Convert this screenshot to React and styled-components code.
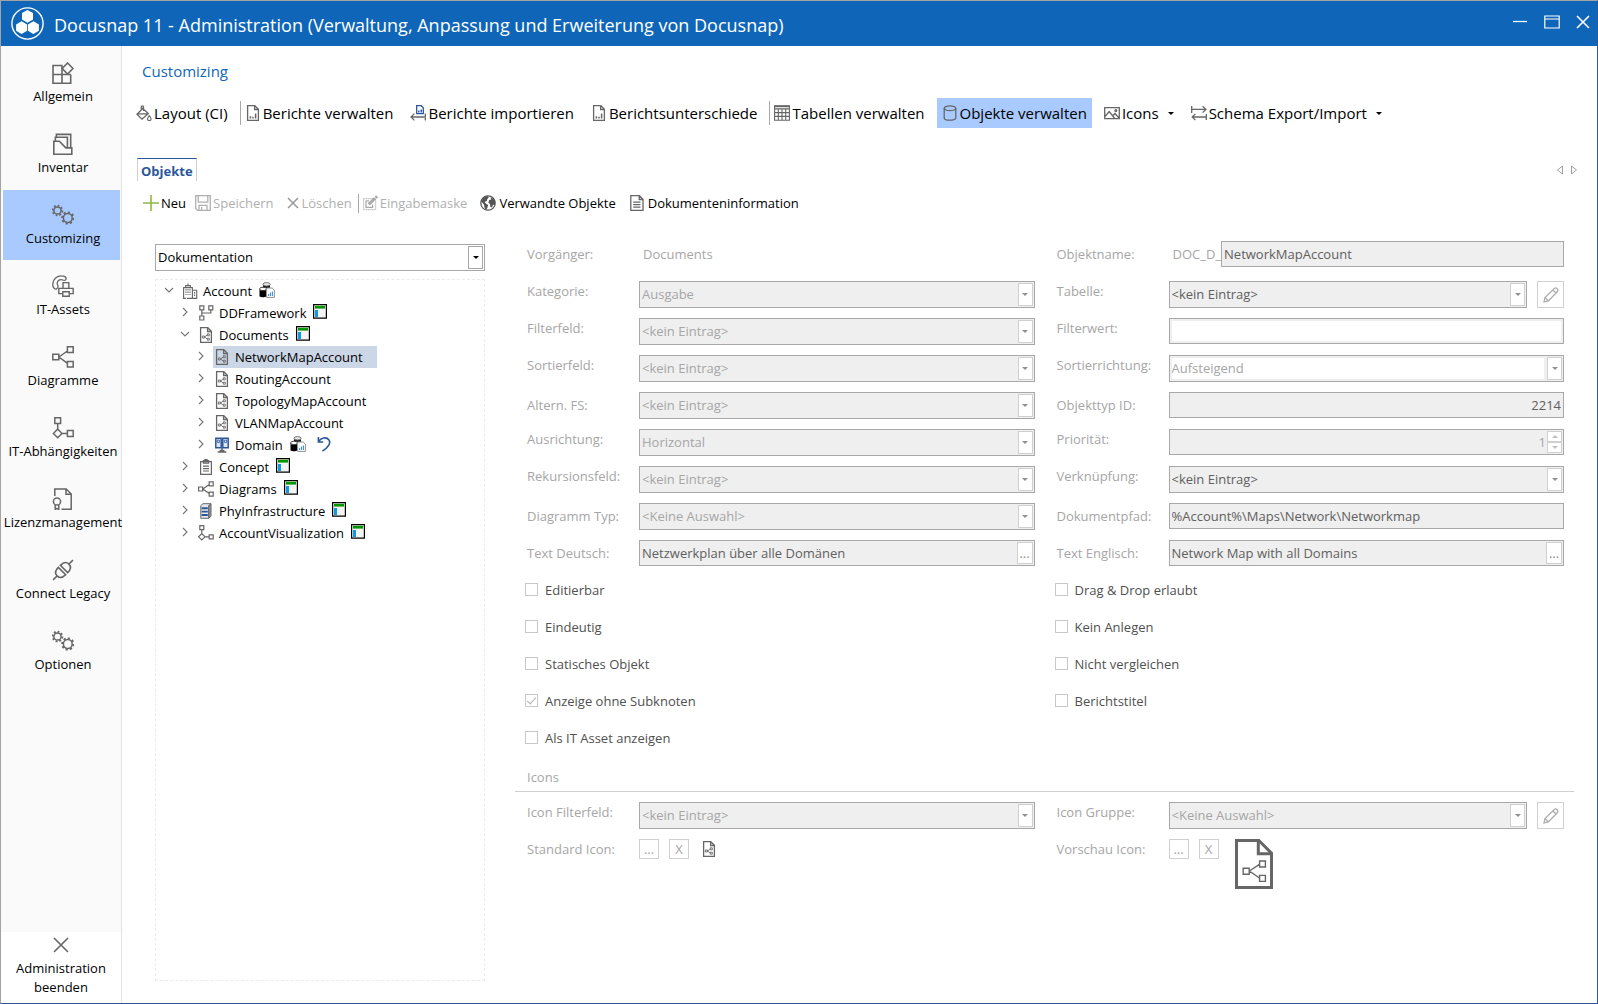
import React from "react";
import styled, { createGlobalStyle, css } from "styled-components";

const c = {
  blue: "#0f66b9",
  navy: "#2b579a",
  select: "#a9caff",
  grey: "#666666",
  label: "#a6a6a6",
  value: "#606060",
  edge: "#a8a8a8",
  soft: "#d0d0d0",
  field: "#efefef",
};

const Global = createGlobalStyle`
  *, *::before, *::after { box-sizing: border-box; }
  body { margin: 0; background: #fff; }
  body, button, input, select {
    font-family: "Open Sans", "Noto Sans", sans-serif;
    font-size: 13px;
    line-height: 18px;
    color: #000;
  }
  button {
    border: 0; padding: 0; background: none;
    display: inline-flex; align-items: center; justify-content: center;
    white-space: nowrap;
  }
  svg { display: block; flex: none; }
`;

/* ---------- window frame ---------- */

const Window = styled.div`
  min-height: 100vh;
  display: flex;
  flex-direction: column;
  border: 1px solid ${c.navy};
  border-top-color: #a3a3a3;
  border-left-color: #a3a3a3;
`;

const TitleBar = styled.header`
  flex: none;
  height: 45px;
  display: flex;
  align-items: center;
  padding: 0 7px 0 10px;
  gap: 10px;
  background: ${c.blue};
  color: #fff;
`;

const Title = styled.h1`
  flex: 1;
  margin: 0;
  padding-top: 2px;
  font-size: 18px;
  line-height: 24px;
  font-weight: 400;
`;

const WindowButtons = styled.div`
  display: flex;
  gap: 16px;
  padding-bottom: 3px;
`;

const Body = styled.div`
  flex: 1;
  display: flex;
`;

/* ---------- sidebar ---------- */

const Sidebar = styled.nav`
  flex: none;
  width: 121px;
  display: flex;
  flex-direction: column;
  background: #fafafa;
  border-right: 1px solid #e2e2e2;
`;

const NavList = styled.div`
  flex: 1;
  display: flex;
  flex-direction: column;
  gap: 1px;
  padding: 2px 1px 0 2px;
`;

const NavItem = styled.button`
  height: 70px;
  flex-direction: column;
  gap: 3px;
  padding-left: 3px;
  background: ${(p) => (p.$active ? c.select : "transparent")};
`;

const ExitItem = styled.button`
  height: 71px;
  flex-direction: column;
  background: #fff;
  gap: 6px;
  line-height: 19px;
  white-space: normal;
  padding: 0 12px 2px;
`;

/* ---------- main area ---------- */

const Main = styled.main`
  flex: 1;
  min-width: 0;
  display: flex;
  flex-direction: column;
  padding-bottom: 22px;
`;

const Heading = styled.h2`
  margin: 13px 0 0 20px;
  font-size: 15px;
  line-height: 24px;
  font-weight: 400;
  color: ${c.blue};
`;

const MainToolbar = styled.div`
  display: flex;
  align-items: center;
  gap: 7px;
  margin: 15px 0 0 9px;
`;

const ToolButton = styled.button`
  height: 30px;
  padding: 0 5px;
  gap: 2px;
  font-size: 15px;
  line-height: 20px;
  background: ${(p) => (p.$active ? c.select : "transparent")};
`;

const Separator = styled.span`
  width: 1px;
  height: ${(p) => p.$height}px;
  margin-left: -${(p) => p.$before || 0}px;
  margin-right: -${(p) => p.$pull}px;
  background: ${c.edge};
`;

const Caret = styled.span`
  margin-left: ${(p) => p.$space || 0}px;
  border: 3px solid transparent;
  border-top-color: ${(p) => p.$tone || "#000"};
  border-bottom-width: 0;
`;

const TabRow = styled.div`
  display: flex;
  align-items: center;
  justify-content: space-between;
  margin: 30px 19px 0 15px;
`;

const Tab = styled.button`
  height: 23px;
  padding: 2px 3px 0;
  border: 1px solid ${c.soft};
  border-top-color: ${c.navy};
  border-bottom: 0;
  font-weight: 700;
  color: ${c.navy};
`;

const TabArrows = styled.div`
  display: flex;
  gap: 6px;
`;

const SubToolbar = styled.div`
  display: flex;
  align-items: center;
  gap: 9px;
  height: 20px;
  margin: 12px 0 0 21px;
`;

const SubButton = styled.button`
  gap: ${(p) => (p.$loose ? 3 : 2)}px;
  padding-left: ${(p) => (p.$loose ? 4 : 0)}px;
  color: ${(p) => (p.disabled ? "#b0b0b0" : "#000")};
`;

const Workspace = styled.div`
  flex: 1;
  display: flex;
  margin: 28px 33px 0 33px;
`;

/* ---------- tree ---------- */

const TreePane = styled.section`
  flex: none;
  width: 330px;
  display: flex;
  flex-direction: column;
  gap: 8px;
  padding-top: 3px;
`;

const Tree = styled.div`
  flex: 1;
  border: 1px dashed #ebebeb;
`;

const TreeRow = styled.div`
  display: flex;
  align-items: center;
  height: 22px;
  padding-left: ${(p) => 5 + 16 * p.$level}px;
`;

const Toggle = styled.button`
  width: 16px;
  height: 22px;
  margin-right: 4px;
  padding-bottom: 2px;
`;

const TreeLabel = styled.button`
  height: 22px;
  gap: 5px;
  padding: 0 ${(p) => (p.$active ? 14 : 7)}px 0 1px;
  background: ${(p) => (p.$active ? "#cbd6e6" : "transparent")};
`;

const Marks = styled.span`
  display: flex;
  gap: 11px;
  padding-bottom: 3px;
`;

/* ---------- form ---------- */

const Form = styled.form`
  flex: 1;
  min-width: 0;
  padding-left: 42px;
  color: ${c.label};
`;

const Columns = styled.div`
  display: grid;
  grid-template-columns: 1fr 1fr;
  column-gap: 22px;
`;

const Column = styled.div`
  display: grid;
  grid-auto-rows: ${(p) => p.$row || 27}px;
  row-gap: ${(p) => (p.$row ? 0 : 10)}px;
  align-content: start;
`;

const Row = styled.div`
  display: grid;
  grid-template-columns: 112px minmax(0, 1fr);
  align-items: start;
`;

const Label = styled.label`
  line-height: ${(p) => (p.$raised ? 20 : 26)}px;
`;

const Plain = styled.output`
  line-height: 26px;
  padding-left: 4px;
`;

const Inline = styled.div`
  display: flex;
  align-items: flex-start;
  gap: ${(p) => p.$gap || 0}px;
`;

const FieldBox = styled.div`
  flex: 1;
  min-width: 0;
  display: flex;
  height: ${(p) => p.$height || 26}px;
  padding: 1px;
  border: 1px solid ${c.edge};
  background: ${(p) => (p.$white ? "#fff" : c.field)};
`;

const control = css`
  flex: 1;
  min-width: 0;
  margin: 0;
  padding: 0 0 0 1px;
  border: 0;
  border-radius: 0;
  outline: 0;
  opacity: 1;
  appearance: none;
  color: ${(p) => p.$tone || c.label};
`;

const Select = styled.select`
  ${control}
  background: ${(p) => (p.$fill ? "#fff" : "transparent")};
  margin: ${(p) => (p.$fill ? "1px 3px 1px 1px" : 0)};
  padding-left: ${(p) => (p.$fill ? 0 : 1)}px;
  padding-bottom: 2px;
`;

const TextInput = styled.input`
  ${control}
  padding-right: 1px;
  text-align: ${(p) => p.$align || "left"};
  background: ${(p) => (p.$fill ? "#fff" : "transparent")};
  margin: ${(p) => (p.$fill ? "1px" : 0)};
`;

const ArrowBox = styled.span`
  flex: none;
  width: 15px;
  display: flex;
  align-items: center;
  justify-content: center;
  border: 1px solid ${(p) => p.$edge || c.soft};
  background: #fff;
`;

const MoreButton = styled.button`
  flex: none;
  width: 16px;
  border: 1px solid ${c.soft};
  background: #fff;
  color: #909090;
`;

const Spinner = styled.div`
  flex: none;
  width: 15px;
  display: grid;
  grid-template-rows: 1fr 1fr;
`;

const SpinButton = styled.button`
  border: 1px solid ${c.soft};
  background: #fff;
`;

const CaretUp = styled.span`
  border: 3px solid transparent;
  border-bottom-color: #c0c0c0;
  border-top-width: 0;
`;

const EditButton = styled.button`
  width: 27px;
  height: 27px;
  border: 1px solid ${c.soft};
`;

const SmallButton = styled.button`
  width: 20px;
  height: 20px;
  border: 1px solid ${c.soft};
  color: ${c.label};
`;

const CheckLabel = styled.label`
  display: flex;
  align-items: flex-start;
  gap: 7px;
  margin-left: -2px;
  color: #505050;
`;

const CheckBox = styled.input`
  appearance: none;
  width: 13px;
  height: 13px;
  margin: 2px 0 0;
  display: grid;
  place-content: center;
  border: 1px solid #c8c8c8;
  background: #fff;

  &:checked::before {
    content: "";
    width: 9px;
    height: 5px;
    margin-bottom: 3px;
    border: solid #b0b0b0;
    border-width: 0 0 1px 1px;
    transform: rotate(-48deg);
  }
`;

const GroupTitle = styled.h3`
  margin: 2px -10px 0 -12px;
  padding: 0 0 5px 12px;
  border-bottom: 1px solid ${c.soft};
  font-size: 13px;
  line-height: 18px;
  font-weight: 400;
`;

const Spacer = styled.div`
  height: ${(p) => p.$height}px;
`;

const Preview = styled.span`
  padding: ${(p) => (p.$large ? "0 0 0 6px" : "2px 0 0 2px")};
`;

/* ---------- icons ---------- */

const Svg = ({ w = 16, h = 16, color = c.grey, sw = 1.3, children }) => (
  <svg width={w} height={h} viewBox={`0 0 ${w} ${h}`} fill="none" stroke={color} strokeWidth={sw} aria-hidden="true">
    {children}
  </svg>
);

const hex = (x, y, r) =>
  [0, 1, 2, 3, 4, 5]
    .map((i) => {
      const a = (Math.PI / 3) * i + Math.PI / 6;
      return `${(x + r * Math.cos(a)).toFixed(1)},${(y + r * Math.sin(a)).toFixed(1)}`;
    })
    .join(" ");

const Logo = () => (
  <Svg w={33} h={33} color="#fff" sw={1.4}>
    <circle cx="16.5" cy="16.5" r="15.6" />
    <g fill="#fff" stroke="none">
      <polygon points={hex(16.5, 9.3, 6.4)} />
      <polygon points={hex(10.6, 20.6, 6.4)} />
      <polygon points={hex(22.4, 20.6, 6.4)} />
    </g>
  </Svg>
);

const Gear = ({ x, y, r }) => (
  <>
    <circle cx={x} cy={y} r={r} />
    <circle cx={x} cy={y} r={r + 1.3} pathLength="16" strokeDasharray="1 1" strokeWidth="1.8" />
  </>
);

const nav = {
  general: (
    <Svg w={22} h={22} sw={1.6}>
      <path d="M10.5 3.5H1v17.7h17.7v-8.7M1 12.5h17.7M10 3.5v17.7" />
      <path d="M15.6 1l5.4 5.5-5.4 5.5-5.4-5.5z" fill="#fafafa" />
    </Svg>
  ),
  inventory: (
    <Svg w={22} h={22} sw={1.6}>
      <path d="M1.8 8.3h5.6l6.4 6.6h6v6.3h-18z" />
      <path d="M3.4 8V4.3h12v10.3M4.4 4V1.4h14.3v13.2" />
    </Svg>
  ),
  gears: (
    <Svg w={22} h={22} sw={1.5}>
      <Gear x={5.5} y={6.5} r={3.6} />
      <Gear x={15.8} y={14} r={4.4} />
    </Svg>
  ),
  assets: (
    <Svg w={22} h={22} sw={1.4}>
      <path
        d="M4.2 14.2C1.6 13.6.6 11.2.8 8.6 1.2 4 5 .7 9.4.8c2 0 4 .6 4.6 2 .5 1.4-.4 2.6-1.8 2.6-1.2 0-1.8-.8-2.8-.8-2.2 0-4 1.6-4.2 3.8 0 1.2.8 1.6.8 2.8 0 1.4-.6 2.4-1.8 3z"
        strokeWidth="1.3"
      />
      <path d="M11 13.4V7.6h5.8v5.8" />
      <path d="M10.6 18.6H6.8v-5.2h14.4v5.2h-3.6" />
      <path d="M10.8 16.8h6.4v4.5h-6.4z" />
    </Svg>
  ),
  diagrams: (
    <Svg w={22} h={22} sw={1.5}>
      <path d="M.8 8.2h6v5.6h-6zM15.4.8h5.8v5.6h-5.8zM15.4 15.4h5.8V21h-5.8zM7 11l8.4-6M7 11l8.4 6.4" />
    </Svg>
  ),
  deps: (
    <Svg w={22} h={22} sw={1.5}>
      <path d="M2.8.8h5.8v5.8H2.8zM15.4 13.6h5.8v5.8h-5.8zM5.7 6.6v5.2M10 16.4h5.4M5.7 12l4.3 4.4-4.3 4.4-4.3-4.4z" />
    </Svg>
  ),
  license: (
    <Svg w={22} h={22} sw={1.5}>
      <path d="M2.8 8V1h11.4l5 5v15.2H9.5M14 1v5.2h5.2" />
      <circle cx="5" cy="13.5" r="3.6" />
      <path d="M3.2 17v4.5l1.8-1.2 1.8 1.2V17" />
    </Svg>
  ),
  plug: (
    <Svg w={22} h={22} sw={1.6}>
      <g transform="rotate(-45 11 11)">
        <path d="M-3 11h5.5M19.5 11H25M9.6 5.8C5 5.8 2.6 8 2.6 11s2.4 5.2 7 5.2zM12.4 5.8c4.6 0 7 2.2 7 5.2s-2.4 5.2-7 5.2z" />
      </g>
    </Svg>
  ),
};

const Cross = ({ size = 16, color = c.grey, sw = 1.6 }) => (
  <Svg w={size} h={size} color={color} sw={sw}>
    <path d={`M1 1L${size - 1} ${size - 1}M${size - 1} 1L1 ${size - 1}`} />
  </Svg>
);

const BucketIcon = () => (
  <Svg w={16} h={16}>
    <path d="M6.6 3.5L1 9.2l5 5 6.3-5.8zM1.5 8.8h10.3M5.3 6V1.8c0-1.2 2.2-1.2 2.2 0V6" />
    <path d="M13.3 10.6c1.2 1.6 1.8 2.4 1.8 3.2a1.8 1.8 0 01-3.6 0c0-.8.6-1.6 1.8-3.2z" strokeWidth="1.1" fill="#fff" />
  </Svg>
);

const ReportIcon = () => (
  <Svg>
    <path d="M2.6.7h7.2l3.6 3.6v11H2.6zM9.6.7v3.8h3.8" />
    <path d="M5.4 13.6v-2.4M8 13.6v-1.8M10.6 13.6V8.4" strokeWidth="1.5" />
  </Svg>
);

const ImportIcon = () => (
  <Svg>
    <path d="M6.7.7h4.6l2 2v6H6.7z" stroke={c.navy} />
    <path d="M8.8 7.5V5.6M11.2 7.5V4.6" stroke={c.navy} strokeWidth="1.4" />
    <path d="M15.3 8.5v7M14.5 12H1M4.4 8.6L1 12l3.4 3.4" />
  </Svg>
);

const TableIcon = () => (
  <Svg sw={1.1}>
    <path d="M.6.8h14.8v14.4H.6zM.6 3.9h14.8M.6 7.6h14.8M.6 11.4h14.8M4.3 3.9v11.3M8 3.9v11.3M11.7 3.9v11.3" />
    <path d="M.6 1.4h14.8" strokeWidth="1.6" />
  </Svg>
);

const CylinderIcon = () => (
  <Svg>
    <ellipse cx="8" cy="3.3" rx="5.8" ry="2.4" />
    <path d="M2.2 3.3v9.6c0 3 11.6 3 11.6 0V3.3" />
  </Svg>
);

const PictureIcon = () => (
  <Svg>
    <path d="M.7 2.7h14.6v11H.7zM1 11.5l4.2-5 5.6 7M9 10.5l2-2 4 4.5" />
    <circle cx="11.8" cy="5.6" r=".9" />
  </Svg>
);

const ExchangeIcon = () => (
  <Svg>
    <path d="M.7 1v7M.7 4.4h14M11.6 1.2l3.3 3.2-3.3 3.2M15.3 9v6M15 12H1.2M4.4 8.9L1.2 12l3.2 3.1" />
  </Svg>
);

const PlusIcon = () => (
  <Svg color="#8cbb3f" sw={1.6}>
    <path d="M8 0v16M0 8h16" />
  </Svg>
);

const SaveIcon = () => (
  <Svg color="#b0b0b0">
    <path d="M.7.7h14.6v14.6H2.6L.7 13.4zM3.2 1v6.2h9.6V1M4 15v-4.6h8V15M6.6 12v3" />
  </Svg>
);

const MaskIcon = () => (
  <Svg color="#a8a8a8" sw={1.2}>
    <path d="M1.6 3.6h12v11h-12z" strokeDasharray="1 1" />
    <path d="M4 5.8v6.6h6.6V9.5M4 5.8h3" />
    <path d="M6.8 9.4L13 3.2" strokeWidth="3" />
    <path d="M13.4 1l2 2" strokeWidth="2" />
  </Svg>
);

const GlobeIcon = () => (
  <Svg color="#555">
    <circle cx="8" cy="8" r="7.2" />
    <path
      d="M1.2 6.2L3.5 2.4 7.6 1l1.2 1.6-1.6 1.6-.4 1.8-2.2 1L6.4 9l1.8 1-1 3.2-1.2 2-1.6-3-.4-2.4zM10.5 2.2l3 1.6 1.6 3.4-.4 3-1.8-.4-.9 2.8-1.6-.6-.4-3-1.6-1.6.8-2.4 2-.6z"
      fill="#555"
      stroke="none"
    />
  </Svg>
);

const DocIcon = () => (
  <Svg>
    <path d="M1.8.7h8.6l3.6 3.6v11H1.8zM10.2.7v3.8H14M4.2 7.2h7.2M4.2 9.7h7.2M4.2 12.2h7.2" />
  </Svg>
);

const MapDoc = () => (
  <Svg>
    <path d="M2.6.7h7.2l3.6 3.6v11H2.6zM9.6.7v3.8h3.8" />
    <path d="M4.4 9h2v2h-2zM9.3 6.8h2v2h-2zM9.3 11.2h2v2h-2zM6.5 10l2.8-2M6.5 10l2.8 2" strokeWidth=".9" />
  </Svg>
);

const BigMapDoc = () => (
  <Svg w={38} h={50} sw={3}>
    <path d="M1.5 1.5h22.3L36.5 14.2v34.3h-35z" />
    <path d="M23.3 1.5v13.2h13.2" />
    <path d="M8.2 29.2h6v6h-6zM24.6 22h5.8v6h-5.8zM24.6 36.4h5.8v6h-5.8zM14.4 32l10-6.6M14.4 32l10 7" strokeWidth="1.4" />
  </Svg>
);

const BuildingIcon = () => (
  <Svg sw={1.1}>
    <path d="M1.6 15.4V4.6h8.8v10.8M3.6 4.4V2.6h4.8v1.8M6 2.5V.4M10.5 7.2h4.2v8.2H5M1 15.4h3" />
    <path d="M4 6v6M6 6v6M8 6v6M12.6 9v5" strokeDasharray="1.4 1.1" />
  </Svg>
);

const FrameIcon = () => (
  <Svg sw={1.2}>
    <path d="M1.8.8h4v4h-4zM10.8.8h4v4h-4zM1.8 11h4v4h-4zM3.8 5v6M3.8 8h9V5" />
  </Svg>
);

const ConceptIcon = () => (
  <Svg sw={1.2}>
    <path d="M2.6 2.6h10.8v12.8H2.6zM5.4 1.6h5.2v2.6H5.4zM7 1.4V.5h2v.9M5 7.2h6M5 9.6h6M5 12h6" />
  </Svg>
);

const ShareIcon = () => (
  <Svg sw={1.2}>
    <path d="M.6 6h4v4h-4zM11.2.8h4v4h-4zM11.2 11.2h4v4h-4zM4.8 8l6.4-4.6M4.8 8l6.4 4.6" />
  </Svg>
);

const VisualIcon = () => (
  <Svg sw={1.2}>
    <path d="M1.8.6h4v4h-4zM11.2 9.8h4v4h-4zM3.8 4.8v3.8M7 11.8h4.2M3.8 8.6L7 11.8 3.8 15 .6 11.8z" />
  </Svg>
);

const RackIcon = () => (
  <Svg sw={1}>
    <path d="M10.6 2.6L13 .7v12.6l-2.4 2z" fill="#8f959e" />
    <path d="M2.8 2.6L5 .7h8l-2.4 1.9v12.7H2.8z" fill="#e4e7eb" />
    <path d="M3.6 5.2h6.2M3.6 8.6h6.2M3.6 12h6.2" stroke={c.navy} strokeWidth="1.9" />
  </Svg>
);

const DomainIcon = () => (
  <Svg sw={1.5} color={c.navy}>
    <path d="M1.8 1.2h5.4v9.6H1.8zM8.8 1.2h5.4v9.6H8.8z" fill="#dfe9f6" />
    <path d="M3.4 3h2v2.6h-2zM10.6 3h2v2.6h-2z" strokeWidth=".8" />
    <path d="M8 11v2.4M3.6 15h8.8M5.6 13.6h4.8" stroke={c.grey} />
  </Svg>
);

const DataMark = () => (
  <Svg>
    <path d="M4 2.4h7v4H4z" fill="#111" stroke="none" />
    <ellipse cx="7.6" cy="2.3" rx="3.6" ry="1.7" fill="#e8e8e8" stroke="#777" strokeWidth="1" />
    <path d="M.5 7h6.8v7.4C5.8 15.4 2 15.4.5 14.4z" fill="#000" stroke="none" />
    <ellipse cx="4" cy="6.9" rx="3.4" ry="1.7" fill="#fff" stroke="#444" strokeWidth="1" />
    <path d="M7.6 6h5.6l2.2 2.2v7.2H7.6z" fill="#fff" stroke="#8a9098" strokeWidth="1" />
    <path d="M9.6 14v-2M11.5 14v-3.4M13.4 14V9.4" stroke="#3f8fd0" strokeWidth="1.1" />
  </Svg>
);

const WindowMark = () => (
  <Svg w={14} h={15} color="#000" sw={1.2}>
    <path d="M.6.6h12.8v13.6H.6z" fill="#f4f4f4" />
    <path d="M2 3.2h10" stroke="#009600" strokeWidth="2.8" />
    <path d="M3.5 6v7" stroke="#109be0" strokeWidth="3" />
  </Svg>
);

const UndoMark = () => (
  <Svg w={14} h={16} color={c.navy} sw={1.6}>
    <path d="M1.4 1v5h4.8M1.6 5.6C4 1.6 9.4.6 11.8 3.8c2.4 3.2-.2 7.4-6.4 11.4" />
  </Svg>
);

const PencilIcon = () => (
  <Svg color="#adadad" sw={1.3}>
    <path d="M1 15l1-4.4L11.6 1.2c1.6-1 4 1.2 3.1 3.1L5.4 14zM10 3l3 3M2.2 10.6l3.2 3.2" />
  </Svg>
);

const Chevron = ({ open }) => (
  <Svg w={10} h={10} color="#777" sw={1.1}>
    <path d={open ? "M1 3l4 4 4-4" : "M3 1l4 4-4 4"} />
  </Svg>
);

/* ---------- data ---------- */

const navItems = [
  ["Allgemein", nav.general],
  ["Inventar", nav.inventory],
  ["Customizing", nav.gears],
  ["IT-Assets", nav.assets],
  ["Diagramme", nav.diagrams],
  ["IT-Abhängigkeiten", nav.deps],
  ["Lizenzmanagement", nav.license],
  ["Connect Legacy", nav.plug],
  ["Optionen", nav.gears],
];

const treeItems = [
  { text: "Account", level: 0, open: true, Icon: BuildingIcon, marks: [DataMark] },
  { text: "DDFramework", level: 1, Icon: FrameIcon, marks: [WindowMark] },
  { text: "Documents", level: 1, open: true, Icon: MapDoc, marks: [WindowMark] },
  { text: "NetworkMapAccount", level: 2, Icon: MapDoc, active: true },
  { text: "RoutingAccount", level: 2, Icon: MapDoc },
  { text: "TopologyMapAccount", level: 2, Icon: MapDoc },
  { text: "VLANMapAccount", level: 2, Icon: MapDoc },
  { text: "Domain", level: 2, Icon: DomainIcon, marks: [DataMark, UndoMark] },
  { text: "Concept", level: 1, Icon: ConceptIcon, marks: [WindowMark] },
  { text: "Diagrams", level: 1, Icon: ShareIcon, marks: [WindowMark] },
  { text: "PhyInfrastructure", level: 1, Icon: RackIcon, marks: [WindowMark] },
  { text: "AccountVisualization", level: 1, Icon: VisualIcon, marks: [WindowMark] },
];

/* ---------- form parts ---------- */

const Choice = ({ id, value, tone, fill }) => (
  <FieldBox $height={27}>
    <Select id={id} disabled $tone={tone} $fill={fill}>
      <option>{value}</option>
    </Select>
    <ArrowBox>
      <Caret $tone="#909090" />
    </ArrowBox>
  </FieldBox>
);

const Field = ({ label, id, raised, children }) => (
  <Row>
    <Label htmlFor={id} $raised={raised}>
      {label}
    </Label>
    {children}
  </Row>
);

const Check = ({ label, checked }) => (
  <CheckLabel>
    <CheckBox type="checkbox" defaultChecked={checked} disabled />
    {label}
  </CheckLabel>
);

const Edit = ({ label }) => (
  <EditButton type="button" aria-label={label}>
    <PencilIcon />
  </EditButton>
);

const More = ({ label }) => (
  <MoreButton type="button" aria-label={label}>
    ...
  </MoreButton>
);

const ObjectForm = () => (
  <Form>
    <Columns>
      <Column>
        <Field label="Vorgänger:" id="parent">
          <Plain id="parent">Documents</Plain>
        </Field>
      </Column>
      <Column>
        <Field label="Objektname:" id="name">
          <Inline>
            <Plain as="span">DOC_D_</Plain>
            <FieldBox>
              <TextInput id="name" defaultValue="NetworkMapAccount" $tone={c.value} readOnly />
            </FieldBox>
          </Inline>
        </Field>
      </Column>
    </Columns>
    <Spacer $height={13} />
    <Columns>
      <Column>
        <Field label="Kategorie:" id="category" raised>
          <Choice id="category" value="Ausgabe" />
        </Field>
        <Field label="Filterfeld:" id="filterfield" raised>
          <Choice id="filterfield" value="<kein Eintrag>" />
        </Field>
        <Field label="Sortierfeld:" id="sortfield" raised>
          <Choice id="sortfield" value="<kein Eintrag>" />
        </Field>
        <Field label="Altern. FS:" id="altfs">
          <Choice id="altfs" value="<kein Eintrag>" />
        </Field>
        <Field label="Ausrichtung:" id="orient" raised>
          <Choice id="orient" value="Horizontal" />
        </Field>
        <Field label="Rekursionsfeld:" id="recursion" raised>
          <Choice id="recursion" value="<kein Eintrag>" />
        </Field>
        <Field label="Diagramm Typ:" id="diagram">
          <Choice id="diagram" value="<Keine Auswahl>" />
        </Field>
        <Field label="Text Deutsch:" id="textde">
          <FieldBox>
            <TextInput id="textde" defaultValue="Netzwerkplan über alle Domänen" $tone={c.value} readOnly />
            <More label="Text Deutsch bearbeiten" />
          </FieldBox>
        </Field>
      </Column>
      <Column>
        <Field label="Tabelle:" id="table" raised>
          <Inline $gap={10}>
            <Choice id="table" value="<kein Eintrag>" tone={c.value} />
            <Edit label="Tabelle bearbeiten" />
          </Inline>
        </Field>
        <Field label="Filterwert:" id="filtervalue" raised>
          <FieldBox>
            <TextInput id="filtervalue" $fill readOnly />
          </FieldBox>
        </Field>
        <Field label="Sortierrichtung:" id="sortdir" raised>
          <Choice id="sortdir" value="Aufsteigend" fill />
        </Field>
        <Field label="Objekttyp ID:" id="typeid">
          <FieldBox>
            <TextInput id="typeid" defaultValue="2214" $tone={c.value} $align="right" readOnly />
          </FieldBox>
        </Field>
        <Field label="Priorität:" id="priority" raised>
          <FieldBox>
            <TextInput id="priority" defaultValue="1" $align="right" readOnly />
            <Spinner>
              <SpinButton type="button" aria-label="Erhöhen">
                <CaretUp />
              </SpinButton>
              <SpinButton type="button" aria-label="Verringern">
                <Caret $tone="#c0c0c0" />
              </SpinButton>
            </Spinner>
          </FieldBox>
        </Field>
        <Field label="Verknüpfung:" id="link" raised>
          <Choice id="link" value="<kein Eintrag>" tone={c.value} />
        </Field>
        <Field label="Dokumentpfad:" id="path">
          <FieldBox>
            <TextInput id="path" defaultValue="%Account%\Maps\Network\Networkmap" $tone={c.value} readOnly />
          </FieldBox>
        </Field>
        <Field label="Text Englisch:" id="texten">
          <FieldBox>
            <TextInput id="texten" defaultValue="Network Map with all Domains" $tone={c.value} readOnly />
            <More label="Text Englisch bearbeiten" />
          </FieldBox>
        </Field>
      </Column>
    </Columns>
    <Spacer $height={14} />
    <Columns>
      <Column $row={37}>
        <Check label="Editierbar" />
        <Check label="Eindeutig" />
        <Check label="Statisches Objekt" />
        <Check label="Anzeige ohne Subknoten" checked />
        <Check label="Als IT Asset anzeigen" />
      </Column>
      <Column $row={37}>
        <Check label="Drag & Drop erlaubt" />
        <Check label="Kein Anlegen" />
        <Check label="Nicht vergleichen" />
        <Check label="Berichtstitel" />
      </Column>
    </Columns>
    <GroupTitle>Icons</GroupTitle>
    <Spacer $height={10} />
    <Columns>
      <Column>
        <Field label="Icon Filterfeld:" id="iconfilter" raised>
          <Choice id="iconfilter" value="<kein Eintrag>" />
        </Field>
        <Field label="Standard Icon:" id="stdicon" raised>
          <Inline $gap={10}>
            <SmallButton type="button" id="stdicon">...</SmallButton>
            <SmallButton type="button">X</SmallButton>
            <Preview>
              <MapDoc />
            </Preview>
          </Inline>
        </Field>
      </Column>
      <Column>
        <Field label="Icon Gruppe:" id="icongroup" raised>
          <Inline $gap={10}>
            <Choice id="icongroup" value="<Keine Auswahl>" />
            <Edit label="Icon Gruppe bearbeiten" />
          </Inline>
        </Field>
        <Field label="Vorschau Icon:" id="previewicon" raised>
          <Inline $gap={10}>
            <SmallButton type="button" id="previewicon">...</SmallButton>
            <SmallButton type="button">X</SmallButton>
            <Preview $large>
              <BigMapDoc />
            </Preview>
          </Inline>
        </Field>
      </Column>
    </Columns>
  </Form>
);

export default function App() {
  return (
    <>
      <Global />
      <Window>
        <TitleBar>
          <Logo />
          <Title>Docusnap 11 - Administration (Verwaltung, Anpassung und Erweiterung von Docusnap)</Title>
          <WindowButtons>
            <button type="button" aria-label="Minimieren">
              <Svg w={16} h={14} color="#fff">
                <path d="M1 6.5h14" />
              </Svg>
            </button>
            <button type="button" aria-label="Maximieren">
              <Svg w={16} h={14} color="#fff" sw={1.2}>
                <path d="M.8 1h14.4v12H.8zM.8 4h14.4" />
              </Svg>
            </button>
            <button type="button" aria-label="Schließen">
              <Cross size={14} color="#fff" />
            </button>
          </WindowButtons>
        </TitleBar>
        <Body>
          <Sidebar>
            <NavList>
              {navItems.map(([text, icon]) => (
                <NavItem key={text} type="button" $active={text === "Customizing"}>
                  {icon}
                  {text}
                </NavItem>
              ))}
            </NavList>
            <ExitItem type="button">
              <Cross />
              Administration beenden
            </ExitItem>
          </Sidebar>
          <Main>
            <Heading>Customizing</Heading>
            <MainToolbar>
              <ToolButton type="button"><BucketIcon />Layout (CI)</ToolButton>
              <Separator $height={24} $pull={8} />
              <ToolButton type="button"><ReportIcon />Berichte verwalten</ToolButton>
              <ToolButton type="button"><ImportIcon />Berichte importieren</ToolButton>
              <ToolButton type="button"><ReportIcon />Berichtsunterschiede</ToolButton>
              <Separator $height={24} $pull={8} />
              <ToolButton type="button"><TableIcon />Tabellen verwalten</ToolButton>
              <ToolButton type="button" $active><CylinderIcon />Objekte verwalten</ToolButton>
              <ToolButton type="button"><PictureIcon />Icons<Caret $space={7} /></ToolButton>
              <ToolButton type="button"><ExchangeIcon />Schema Export/Import<Caret $space={7} /></ToolButton>
            </MainToolbar>
            <TabRow>
              <Tab type="button">Objekte</Tab>
              <TabArrows>
                <button type="button" aria-label="Vorheriger Reiter">
                  <Svg w={8} h={10} color="#a0a0a0" sw={1}><path d="M6.5 1v8l-5-4z" /></Svg>
                </button>
                <button type="button" aria-label="Nächster Reiter">
                  <Svg w={8} h={10} color="#a0a0a0" sw={1}><path d="M1.5 1v8l5-4z" /></Svg>
                </button>
              </TabArrows>
            </TabRow>
            <SubToolbar>
              <SubButton type="button"><PlusIcon />Neu</SubButton>
              <SubButton type="button" disabled><SaveIcon />Speichern</SubButton>
              <SubButton type="button" disabled $loose><Cross size={12} color="#999" sw={1.5} />Löschen</SubButton>
              <Separator $height={19} $before={3} $pull={6} />
              <SubButton type="button" disabled><MaskIcon />Eingabemaske</SubButton>
              <SubButton type="button" $loose><GlobeIcon />Verwandte Objekte</SubButton>
              <SubButton type="button" $loose><DocIcon />Dokumenteninformation</SubButton>
            </SubToolbar>
            <Workspace>
              <TreePane>
                <Inline>
                  <FieldBox $height={27} $white>
                    <Select aria-label="Bereich" $tone="#000">
                      <option>Dokumentation</option>
                    </Select>
                    <ArrowBox $edge={c.edge}>
                      <Caret />
                    </ArrowBox>
                  </FieldBox>
                </Inline>
                <Tree role="tree">
                  {treeItems.map(({ text, level, open, Icon, marks, active }) => (
                    <TreeRow key={text} $level={level} role="treeitem" aria-expanded={!!open}>
                      <Toggle type="button" aria-label={text + " umschalten"}>
                        <Chevron open={open} />
                      </Toggle>
                      <TreeLabel type="button" $active={active}>
                        <Icon />
                        {text}
                      </TreeLabel>
                      {marks && (
                        <Marks>
                          {marks.map((Mark, i) => (
                            <Mark key={i} />
                          ))}
                        </Marks>
                      )}
                    </TreeRow>
                  ))}
                </Tree>
              </TreePane>
              <ObjectForm />
            </Workspace>
          </Main>
        </Body>
      </Window>
    </>
  );
}
